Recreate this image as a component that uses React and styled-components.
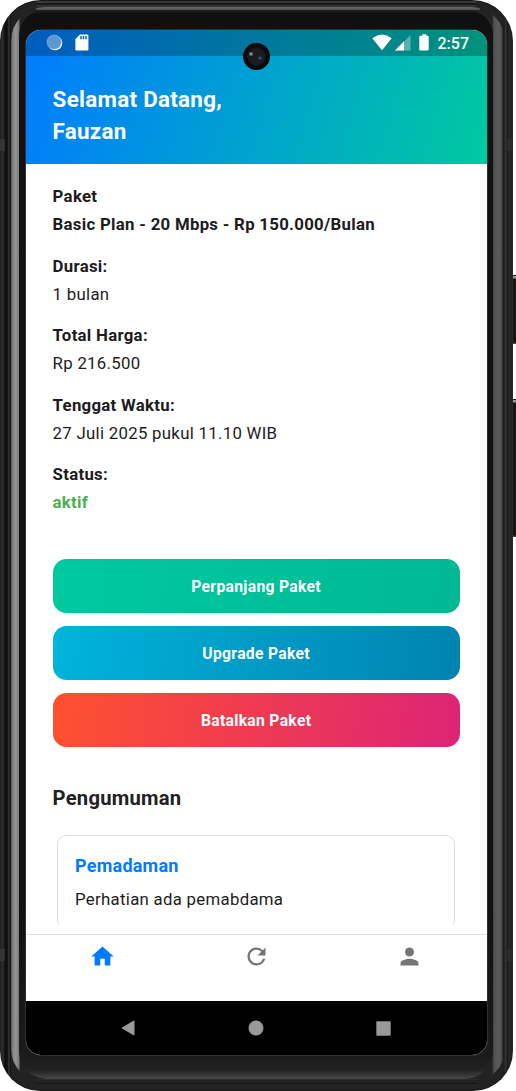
import React from 'react';
import styled, { createGlobalStyle } from 'styled-components';

const GlobalStyle = createGlobalStyle`
  * { box-sizing: border-box; }
  body { margin: 0; background: #fff; font-family: Roboto, sans-serif; overflow: hidden; }
  h1, h2, h3, p { margin: 0; }
`;

const Device = styled.main`
  position: relative;
  width: 516px;
  height: 1091px;
  padding-right: 3px;
  overflow: hidden;
`;

const Shell = styled.div`
  height: 1091px;
  padding: 7px 8px 10px 11px;
  border-radius: 41px 41px 40px 40px;
  background:
    linear-gradient(#191919 0 1px, #393939 1px 3px, #191919 3px 5px, #333 5px 7px) center top / calc(100% - 74px) 7px no-repeat,
    linear-gradient(#303030, #141414 2px, #242424 4px, #222 10px) center bottom / calc(100% - 74px) 10px no-repeat,
    linear-gradient(90deg, #262626 0 1px, #303030 2px, #202020 4px, #0e0e0e 5px 6px, #171717 8px, #444 9px, #151515 10px 11px,
      #222 11px calc(100% - 10px), #1c1c1c calc(100% - 9px), #3a3a3a calc(100% - 7px), #161616 calc(100% - 6px), #282828 calc(100% - 4px), #222 calc(100% - 2px), #3a3a3a 100%);
  box-shadow: inset 0 0 2px #111;
`;

const Rim = styled.div`
  height: 100%;
  padding: 3px 12px 2px 8px;
  border-radius: 34px 34px 32px 32px;
  background:
    linear-gradient(#6c6c6c, #4e4e4e) center top / calc(100% - 50px) 3px no-repeat,
    linear-gradient(#303030, #1a1a1a) center bottom / calc(100% - 50px) 2px no-repeat,
    linear-gradient(90deg, #555 0, #858585 2px, #949494 5px, #777 8px, #222 9px, #222 calc(100% - 13px), #505050 calc(100% - 11px), #5c5c5c calc(100% - 6px), #484848 calc(100% - 3px), #1a1a1a calc(100% - 2px), #262626 100%);
`;

const Bezel = styled.div`
  height: 100%;
  padding: 19.5px 6.4px 24px 6.6px;
  border-radius: 26px 26px 28px 28px;
  background: linear-gradient(#202020 0, #0f0f0f 4px, #121212 30px, #121212 900px, #1b1b1b calc(100% - 22px), #222 calc(100% - 9px), #484848 100%);
`;

const Screen = styled.div`
  display: flex;
  flex-direction: column;
  height: 1025.5px;
  width: 461px;
  overflow: hidden;
  border-radius: 15px;
  background: #fff;
  box-shadow: 0 0 0 1px #303030;
`;

const Header = styled.header`
  flex: 0 0 134.5px;
  color: #fff;
  background: linear-gradient(106.2deg, #007bff, #00c9a0);
`;

const StatusBar = styled.div`
  display: flex;
  align-items: center;
  height: 26.5px;
  padding: 0 17.6px 0 20.5px;
  background: rgba(0, 0, 0, 0.25);
`;

const StatusIcons = styled.div`
  display: flex;
  align-items: center;
  gap: ${(p) => p.$gap}px;
  margin-right: ${(p) => (p.$start ? 'auto' : '8px')};
  svg { display: block; }
`;

const Clock = styled.span`
  font-size: 16px;
  font-weight: 500;
  line-height: 26px;
  padding-top: 2px;
`;

const Greeting = styled.h1`
  padding: 27.4px 27px 0;
  font-size: 22.4px;
  font-weight: 700;
  line-height: 32.1px;
  letter-spacing: 0.28px;
`;

const Content = styled.section`
  flex: 0 0 761px;
  overflow: hidden;
  padding: 18.2px 27px 0;
  color: #1d1b20;
`;

const Details = styled.div`
  display: flex;
  flex-direction: column;
  gap: 13.1px;
`;

const Label = styled.p`
  font-size: 16.8px;
  font-weight: 700;
  line-height: 28.2px;
  letter-spacing: 0.29px;
`;

const Value = styled(Label)`
  font-weight: ${(p) => (p.$bold ? 700 : 400)};
  color: ${(p) => p.$color || 'inherit'};
`;

const Actions = styled.div`
  display: flex;
  flex-direction: column;
  gap: 13.5px;
  margin-top: 42.3px;
`;

const ActionButton = styled.button`
  height: 53.8px;
  border: 0;
  border-radius: 13.5px;
  padding: 0.7px 0 0;
  color: #fff;
  font: 700 15.7px/54px Roboto, sans-serif;
  letter-spacing: 0.3px;
  background: linear-gradient(97.5deg, ${(p) => p.$from}, ${(p) => p.$to});
`;

const SectionTitle = styled.h2`
  margin-top: 36px;
  font-size: 20.2px;
  font-weight: 700;
  line-height: 30px;
  letter-spacing: 0.24px;
  color: #212121;
`;

const Notice = styled.article`
  height: 94px;
  margin: 21.5px 4.5px 0;
  padding: 17px;
  border: 1px solid #dedede;
  border-radius: 9px;
`;

const NoticeTitle = styled.h3`
  font-size: 18px;
  font-weight: 700;
  line-height: 26px;
  letter-spacing: 0.22px;
  color: #007bff;
`;

const NoticeText = styled.p`
  margin-top: 7.6px;
  font-size: 16.8px;
  line-height: 27px;
  letter-spacing: 0.29px;
`;

const TabBar = styled.nav`
  display: flex;
  flex: 0 0 67px;
  margin-top: 9px;
  border-top: 1px solid #dedede;
`;

const Tab = styled.div`
  flex: 1;
  display: flex;
  justify-content: center;
  padding-top: 8px;
  color: ${(p) => (p.$active ? '#007bff' : '#757575')};
`;

const SystemBar = styled.div`
  flex: 1;
  display: flex;
  align-items: center;
  justify-content: space-between;
  padding: 0 95.5px 0 95.5px;
  background: #000;
`;

const Camera = styled.div`
  position: absolute;
  top: 43px;
  left: 243px;
  width: 27px;
  height: 27px;
  border-radius: 50%;
  background:
    radial-gradient(circle at 8px 11px, #d8d8d8 0, #777 1px, transparent 2.5px),
    radial-gradient(circle at 17px 15px, #4b79b4 0, #1d3458 1.2px, transparent 3px),
    radial-gradient(circle, #1b1a20 0 8px, #0c0c0e 10px, #050505 13px);
`;

const SideKey = styled.div`
  position: absolute;
  right: 0;
  top: ${(p) => p.$top}px;
  width: 3px;
  height: ${(p) => p.$height}px;
  background: linear-gradient(#222 0 1px, #999 1px 3px, #161412 4px calc(100% - 2px), #555 100%);
`;

const AntennaBand = styled.div`
  position: absolute;
  left: ${(p) => p.$left}px;
  top: ${(p) => p.$top}px;
  width: 5px;
  height: 12px;
  background: #383838;
  opacity: ${(p) => (p.$faint ? 0.45 : 0.8)};
`;

const MaterialIcon = ({ d }) => (
  <svg width="27" height="27" viewBox="0 0 24 24" fill="currentColor"><path d={d} /></svg>
);

const tabs = [
  'M10 20v-6h4v6h5v-8h3L12 3 2 12h3v8z',
  'M17.65 6.35A7.958 7.958 0 0 0 12 4c-4.42 0-7.99 3.58-7.99 8s3.57 8 7.99 8c3.73 0 6.84-2.55 7.73-6h-2.08A5.99 5.99 0 0 1 12 18c-3.31 0-6-2.69-6-6s2.69-6 6-6c1.66 0 3.14.69 4.22 1.78L13 11h7V4l-2.35 2.35z',
  'M12 12c2.21 0 4-1.79 4-4s-1.79-4-4-4-4 1.79-4 4 1.79 4 4 4zm0 2c-2.67 0-8 1.34-8 4v2h16v-2c0-2.66-5.33-4-8-4z',
];

const details = [
  { label: 'Paket', value: 'Basic Plan - 20 Mbps - Rp 150.000/Bulan', bold: true },
  { label: 'Durasi:', value: '1 bulan' },
  { label: 'Total Harga:', value: 'Rp 216.500' },
  { label: 'Tenggat Waktu:', value: '27 Juli 2025 pukul 11.10 WIB' },
  { label: 'Status:', value: 'aktif', bold: true, color: '#4caf50' },
];

const actions = [
  { text: 'Perpanjang Paket', from: '#00c9a0', to: '#00b894' },
  { text: 'Upgrade Paket', from: '#00b4db', to: '#0083b0' },
  { text: 'Batalkan Paket', from: '#ff512f', to: '#dd2476' },
];

export default function App() {
  return (
    <Device>
      <GlobalStyle />
      <Shell>
        <Rim>
          <Bezel>
            <Screen>
              <Header>
                <StatusBar>
                  <StatusIcons $start $gap={11.5}>
                    <svg width="17" height="17" viewBox="0 0 17 17">
                      <circle cx="9" cy="9" r="7.3" fill="#fff" fillOpacity=".95" />
                      <circle cx="8" cy="8" r="7.3" fill="#5a98d2" />
                      <circle cx="8" cy="8" r="6.8" fill="none" stroke="#8ab8e2" strokeWidth="1" strokeDasharray="1 1" />
                    </svg>
                    <svg width="14" height="17" viewBox="0 0 14 17">
                      <path d="M5 .5h7.2q1.2 0 1.2 1.2v13.6q0 1.2-1.2 1.2H1.6Q.4 16.5 .4 15.3V5z" fill="#fff" />
                      <path d="M6 2v3.2M8.5 2v3.2M11 2v3.2" stroke="#0864a8" strokeWidth="1.5" />
                    </svg>
                  </StatusIcons>
                  <StatusIcons $gap={3}>
                    <svg width="20" height="17" viewBox="0 0 20 17">
                      <path d="M.3 4.2Q10-3.2 19.7 4.2L10.7 15.6q-.7.9-1.4 0z" fill="#fff" />
                    </svg>
                    <svg width="16" height="17" viewBox="0 0 16 17">
                      <path d="M15.5 1v15.5H.2z" fill="#fff" fillOpacity=".35" />
                      <path d="M9 7.2V16.5H0z" fill="#fff" />
                    </svg>
                    <svg width="16" height="17" viewBox="0 0 16 17">
                      <path d="M8.3.3h4v1.5h1.4q1 0 1 1v12.700q0 1-1 1H6.3q-1 0-1-1V2.8q0-1 1-1h2z" fill="#fff" />
                    </svg>
                  </StatusIcons>
                  <Clock>2:57</Clock>
                </StatusBar>
                <Greeting>Selamat Datang,<br />Fauzan</Greeting>
              </Header>
              <Content>
                <Details>
                  {details.map((d) => (
                    <div key={d.label}>
                      <Label>{d.label}</Label>
                      <Value $bold={d.bold} $color={d.color}>{d.value}</Value>
                    </div>
                  ))}
                </Details>
                <Actions>
                  {actions.map((a) => (
                    <ActionButton key={a.text} $from={a.from} $to={a.to}>{a.text}</ActionButton>
                  ))}
                </Actions>
                <SectionTitle>Pengumuman</SectionTitle>
                <Notice>
                  <NoticeTitle>Pemadaman</NoticeTitle>
                  <NoticeText>Perhatian ada pemabdama</NoticeText>
                </Notice>
              </Content>
              <TabBar>
                {tabs.map((d, i) => (
                  <Tab key={d} $active={i === 0}><MaterialIcon d={d} /></Tab>
                ))}
              </TabBar>
              <SystemBar>
                <svg width="14" height="16" viewBox="0 0 14 16"><path d="M12.5 .8q1-.5 1 .6v13.2q0 1.1-1 .6L1 8.5Q.3 8 1 7.5z" fill="#999" /></svg>
                <svg width="16" height="16" viewBox="0 0 16 16"><circle cx="8" cy="8" r="7.5" fill="#999" /></svg>
                <svg width="15" height="15" viewBox="0 0 15 15"><rect x=".3" y=".3" width="14.4" height="14.4" rx="1" fill="#999" /></svg>
              </SystemBar>
            </Screen>
          </Bezel>
        </Rim>
      </Shell>
      <Camera />
      <AntennaBand $left={0} $top={139} />
      <AntennaBand $left={0} $top={949} />
      <AntennaBand $left={507} $top={139} $faint />
      <AntennaBand $left={507} $top={949} $faint />
      <SideKey $top={275} $height={69} />
      <SideKey $top={399} $height={138} />
    </Device>
  );
}
